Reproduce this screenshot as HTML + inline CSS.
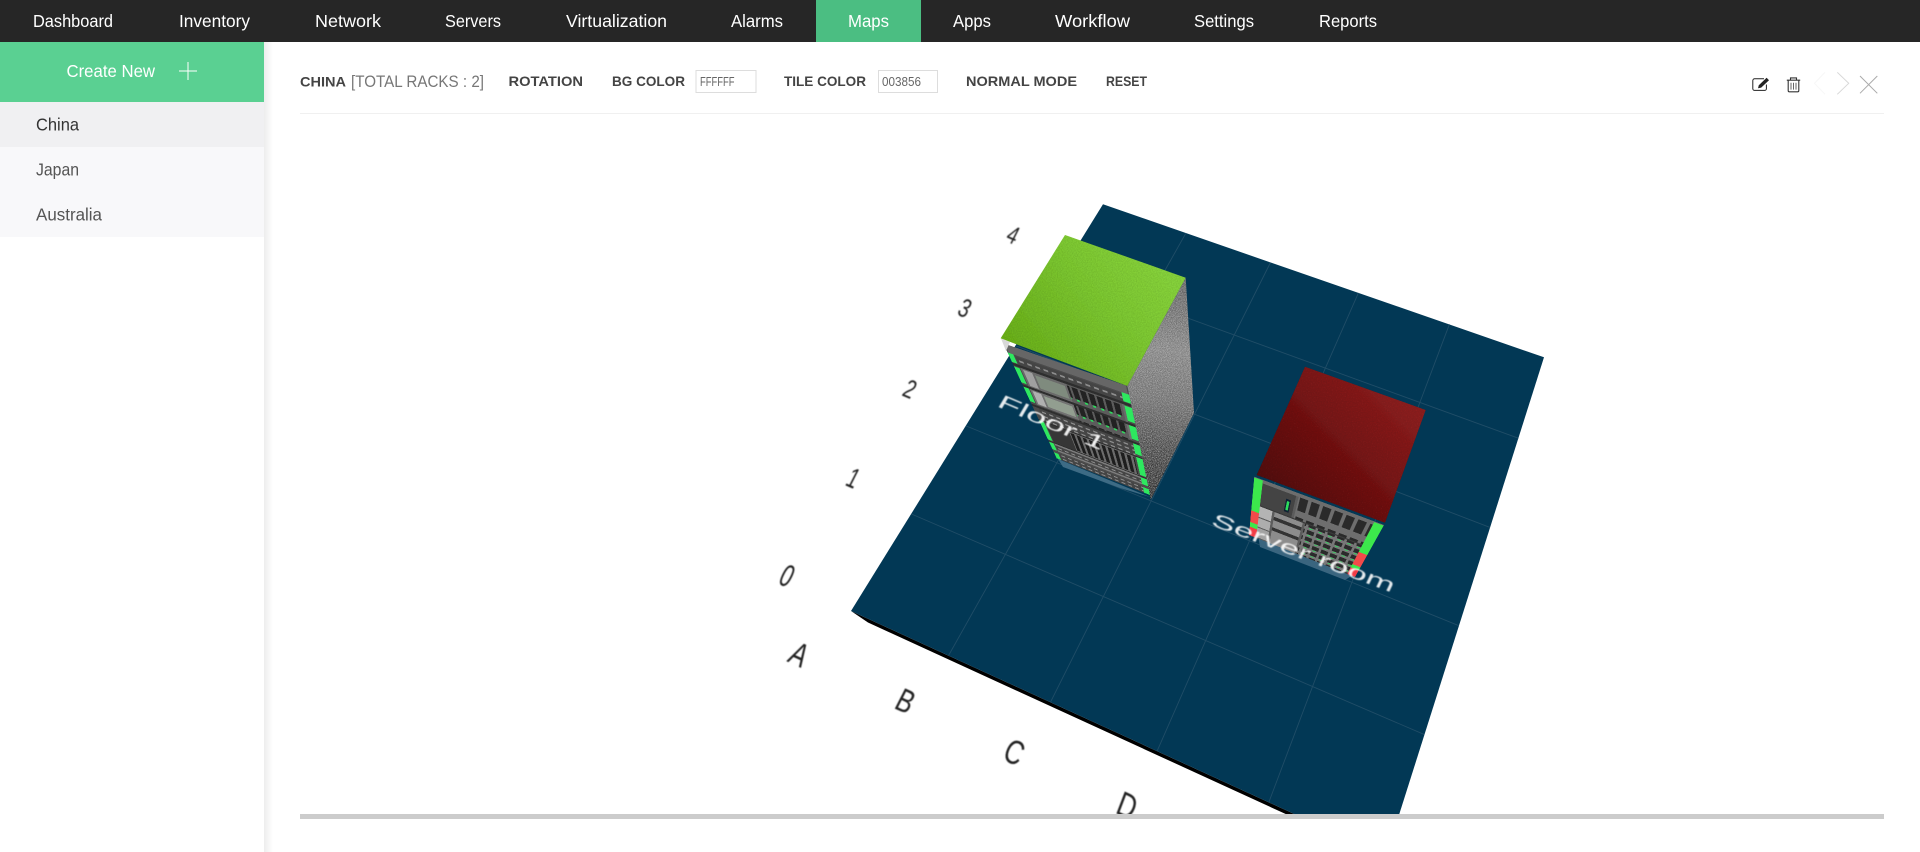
<!DOCTYPE html>
<html lang="en">
<head>
<meta charset="utf-8">
<title>Maps</title>
<style>
html,body{margin:0;padding:0;width:1920px;height:852px;overflow:hidden;background:#fff}
svg{display:block}
.layer{position:absolute;left:0;top:0}
.front{position:absolute;left:0;top:0;width:400px;height:400px;transform-origin:0 0;filter:blur(.5px)}
text{font-family:"Liberation Sans",sans-serif}
</style>
</head>
<body>
<!-- base layer: chrome + floor -->
<svg class="layer" width="1920" height="852" viewBox="0 0 1920 852">
<defs>
<clipPath id="cv"><rect x="300" y="114" width="1584" height="700"/></clipPath>
<linearGradient id="shadow" x1="0" x2="1" y1="0" y2="0"><stop offset="0" stop-color="#000" stop-opacity=".07"/><stop offset="1" stop-color="#000" stop-opacity="0"/></linearGradient>
<linearGradient id="sideG" gradientUnits="userSpaceOnUse" x1="1175" y1="280" x2="1155" y2="500"><stop offset="0" stop-color="#666"/><stop offset=".32" stop-color="#8c8c8c"/><stop offset=".55" stop-color="#767676"/><stop offset=".8" stop-color="#474747"/><stop offset="1" stop-color="#2a2a2a"/></linearGradient>
<filter id="noise" x="0" y="0" width="100%" height="100%"><feTurbulence type="fractalNoise" baseFrequency="1.2" numOctaves="2" seed="4" result="n"/><feColorMatrix in="n" type="matrix" values="0 0 0 0 0  0 0 0 0 0  0 0 0 0 0  .9 0 0 0 -.38" result="d"/><feComposite in="d" in2="SourceAlpha" operator="in" result="c"/><feColorMatrix in="n" type="matrix" values="0 0 0 0 1  0 0 0 0 1  0 0 0 0 1  0 .8 0 0 -.34" result="w"/><feComposite in="w" in2="SourceAlpha" operator="in" result="e"/><feMerge><feMergeNode in="SourceGraphic"/><feMergeNode in="c"/><feMergeNode in="e"/></feMerge></filter>
<filter id="soft"><feGaussianBlur stdDeviation=".4"/></filter>
</defs>

<!-- sidebar -->
<rect x="264" y="42" width="9" height="810" fill="url(#shadow)"/>
<rect x="0" y="42" width="264" height="60" fill="#5ad092"/>
<rect x="0" y="102" width="264" height="45" fill="#f0f0f2"/>
<rect x="0" y="147" width="264" height="90" fill="#f8f8fa"/>
<text x="66.5" y="77" font-size="17.5" fill="#fff" textLength="88.5" lengthAdjust="spacingAndGlyphs">Create New</text>
<path d="M188 62V80M179 71H197" stroke="#fff" stroke-width="1" fill="none"/>
<text x="36" y="130.5" font-size="17.5" fill="#333" textLength="43" lengthAdjust="spacingAndGlyphs">China</text>
<text x="36" y="175.5" font-size="17.5" fill="#555" textLength="43" lengthAdjust="spacingAndGlyphs">Japan</text>
<text x="36" y="220.5" font-size="17.5" fill="#555" textLength="66" lengthAdjust="spacingAndGlyphs">Australia</text>

<!-- toolbar -->
<g font-size="14" font-weight="bold" fill="#444">
<text x="300" y="86.5" textLength="46" lengthAdjust="spacingAndGlyphs">CHINA</text>
<text x="508.5" y="86" textLength="74.5" lengthAdjust="spacingAndGlyphs">ROTATION</text>
<text x="612" y="86" textLength="73" lengthAdjust="spacingAndGlyphs">BG COLOR</text>
<text x="784" y="86" textLength="82" lengthAdjust="spacingAndGlyphs">TILE COLOR</text>
<text x="966" y="86" textLength="111" lengthAdjust="spacingAndGlyphs">NORMAL MODE</text>
<text x="1106" y="86" textLength="41" lengthAdjust="spacingAndGlyphs">RESET</text>
</g>
<text x="351" y="87" font-size="17" fill="#777" textLength="133" lengthAdjust="spacingAndGlyphs">[TOTAL RACKS : 2]</text>
<rect x="696" y="70.5" width="60" height="22" fill="#fff" stroke="#ddd"/>
<rect x="878.5" y="70.5" width="59" height="22" fill="#fff" stroke="#ddd"/>
<text x="700" y="86" font-size="13" fill="#666" textLength="34.5" lengthAdjust="spacingAndGlyphs">FFFFFF</text>
<text x="882" y="86" font-size="13" fill="#666" textLength="39" lengthAdjust="spacingAndGlyphs">003856</text>
<rect x="300" y="113" width="1584" height="1" fill="#f0f0f0"/>

<!-- toolbar icons -->
<path d="M1764 78.8H1754.6A1.8 1.8 0 0 0 1752.8 80.6V88.6A1.8 1.8 0 0 0 1754.6 90.4H1764.6A1.8 1.8 0 0 0 1766.4 88.6V84.5" fill="none" stroke="#222" stroke-width="1"/>
<path d="M1758 88.2L1758.8 85.2L1766.6 77.8L1769 80.2L1761.2 87.6Z" fill="#222"/>
<path d="M1790.5 79.8V77.9H1796.5V79.8M1786.8 80.2H1800.2" fill="none" stroke="#333" stroke-width="1.1"/>
<path d="M1788.2 80.5V90.6A1.2 1.2 0 0 0 1789.4 91.8H1797.6A1.2 1.2 0 0 0 1798.8 90.6V80.5" fill="none" stroke="#333" stroke-width="1.1"/>
<path d="M1791 82.8V89.6M1793.5 82.8V89.6M1796 82.8V89.6" stroke="#666" stroke-width="1" fill="none"/>
<path d="M1825 72.3L1814.5 83.3L1825 94.3" fill="none" stroke="#f7f7f7" stroke-width="1"/>
<path d="M1837.3 72.3L1848.7 83.3L1837.3 94.3" fill="none" stroke="#d8d8d8" stroke-width="1"/>
<path d="M1860 76L1877.3 93.3M1877.3 76L1860 93.3" fill="none" stroke="#aaa" stroke-width="1"/>

<!-- floor -->
<g clip-path="url(#cv)">
<polygon points="851,611 1386,856 1386,860 868,622.5" fill="#000"/>
<polygon points="851,611 1386,856 1544,357.3 1103,204.3" fill="#023855"/>
<g stroke="#204d67" stroke-width=".9" fill="none">
<path d="M948.5 655.6L1185.8 233.3M1050.4 702.3L1270.5 262.5M1157.1 751.1L1358.4 292.9M1268.8 802.3L1449.4 324.3"/>
<path d="M911.4 514L1424.4 734.6M966.2 426L1458.9 625.7M1016.2 345.9L1490 527.4M1062 272.4L1518.3 438.2"/>
</g>
<g fill="#222" filter="url(#soft)">
<text dominant-baseline="central" text-anchor="middle" font-size="30" transform="matrix(.74 .34 -.55 .98 799 655)">A</text>
<text dominant-baseline="central" text-anchor="middle" font-size="30" transform="matrix(.74 .34 -.5 .98 905 702)">B</text>
<text dominant-baseline="central" text-anchor="middle" font-size="31" transform="matrix(.74 .34 -.45 1 1014 753)">C</text>
<text dominant-baseline="central" text-anchor="middle" font-size="32" transform="matrix(.74 .34 -.38 1 1127 806)">D</text>
<text dominant-baseline="central" text-anchor="middle" font-size="30" transform="matrix(.64 .27 -.48 .95 787 576)">0</text>
<text dominant-baseline="central" text-anchor="middle" font-size="27" transform="matrix(.64 .27 -.48 .95 853 479)">1</text>
<text dominant-baseline="central" text-anchor="middle" font-size="25" transform="matrix(.7 .3 -.48 .95 910 389)">2</text>
<text dominant-baseline="central" text-anchor="middle" font-size="25" transform="matrix(.7 .3 -.48 .95 965 308)">3</text>
<text dominant-baseline="central" text-anchor="middle" font-size="24" transform="matrix(.7 .3 -.48 .95 1013 235)">4</text>
</g>
</g>
<polygon points="1058,459 1150,497 1120,488 1063,467" fill="#3d6b85"/>
<polygon points="1258,535 1353,575 1345,580 1260,547" fill="#3a657f"/>
<polygon points="1185.7,277.7 1127.3,386 1150.7,500 1194,413" fill="url(#sideG)" filter="url(#noise)"/>
</svg>

<!-- nav bar -->
<svg class="layer" width="1920" height="42" viewBox="0 0 1920 42">
<rect width="1920" height="42" fill="#262626"/>
<rect x="816" width="105" height="42" fill="#4bbe82"/>
<g font-size="17.5" fill="#fff">
<text x="33" y="27" textLength="80" lengthAdjust="spacingAndGlyphs">Dashboard</text>
<text x="179" y="27" textLength="71" lengthAdjust="spacingAndGlyphs">Inventory</text>
<text x="315" y="27" textLength="66" lengthAdjust="spacingAndGlyphs">Network</text>
<text x="445" y="27" textLength="56" lengthAdjust="spacingAndGlyphs">Servers</text>
<text x="566" y="27" textLength="101" lengthAdjust="spacingAndGlyphs">Virtualization</text>
<text x="731" y="27" textLength="52" lengthAdjust="spacingAndGlyphs">Alarms</text>
<text x="848" y="27" textLength="41" lengthAdjust="spacingAndGlyphs">Maps</text>
<text x="953" y="27" textLength="38" lengthAdjust="spacingAndGlyphs">Apps</text>
<text x="1055" y="27" textLength="75" lengthAdjust="spacingAndGlyphs">Workflow</text>
<text x="1194" y="27" textLength="60" lengthAdjust="spacingAndGlyphs">Settings</text>
<text x="1319" y="27" textLength="58" lengthAdjust="spacingAndGlyphs">Reports</text>
</g>
</svg>

<!-- rack 1 front -->
<div class="front" style="transform:matrix3d(.138875,.04815,0,-.0001518, 1.04175,.681425,0,.00085955, 0,0,1,0, 1003.3,343.3,0,1)">
<svg width="400" height="400" viewBox="0 0 100 100" preserveAspectRatio="none">
<defs>
<pattern id="p1" width="7" height="14" patternUnits="userSpaceOnUse"><rect width="7" height="14" fill="#5c5c5c"/><rect x="1" y="2" width="5" height="9" fill="#222"/><rect x="2" y="11" width="2.5" height="1.6" fill="#2ddc5c"/></pattern>
<pattern id="p2" width="7" height="4" patternUnits="userSpaceOnUse"><rect width="7" height="4" fill="#454545"/><rect x="1" y="1.2" width="4" height="1.4" fill="#8e8e8e"/></pattern>
<pattern id="p3" width="6" height="20" patternUnits="userSpaceOnUse"><rect width="6" height="20" fill="#6c6c6c"/><rect x="1" y="1" width="3.6" height="18" fill="#1e1e1e"/></pattern>
</defs>
<rect width="100" height="100" fill="#4c4c4c"/>
<rect x="1" y="0" width="98" height="6" fill="#666"/>
<rect x="6" y="7" width="88" height="6" fill="url(#p2)"/>
<rect y="13" width="100" height="2" fill="#2e2e2e"/>
<rect x="6" y="15" width="88" height="14" fill="#6a6a6a"/>
<rect x="8" y="16" width="8" height="12" fill="#a0a0a0"/>
<rect x="18" y="17" width="26" height="10" fill="#7f8b7e"/>
<rect x="46" y="15" width="46" height="14" fill="url(#p1)"/>
<rect y="29" width="100" height="2" fill="#2e2e2e"/>
<rect x="6" y="31" width="88" height="13" fill="#727272"/>
<rect x="8" y="32" width="8" height="11" fill="#b0b0b0"/>
<rect x="18" y="33" width="26" height="9" fill="#929e90"/>
<rect x="46" y="31" width="46" height="14" fill="url(#p1)"/>
<rect y="45" width="100" height="2" fill="#2e2e2e"/>
<rect x="6" y="47" width="88" height="12" fill="url(#p2)"/>
<rect y="59" width="100" height="1" fill="#2a2a2a"/>
<rect x="6" y="60" width="24" height="20" fill="#363636"/>
<rect x="30" y="60" width="62" height="20" fill="url(#p3)"/>
<rect y="80" width="100" height="1" fill="#2a2a2a"/>
<rect x="6" y="81" width="88" height="9" fill="#7c7c7c"/>
<rect x="6" y="83" width="88" height="5" fill="url(#p2)"/>
<rect x="6" y="92" width="88" height="8" fill="url(#p2)"/>
<g fill="#2ee85f">
<rect x="0" y="6" width="5" height="6.5"/><rect x="0" y="15.7" width="5" height="12"/><rect x="0" y="31" width="5" height="12"/><rect x="0" y="60" width="5" height="19"/><rect x="0" y="81.5" width="5" height="8"/><rect x="0" y="93" width="5" height="7"/>
<rect x="94" y="6" width="6" height="6.5"/><rect x="94" y="15.7" width="6" height="12"/><rect x="94" y="31" width="6" height="12"/><rect x="94" y="47" width="6" height="10"/><rect x="94" y="60" width="6" height="19"/><rect x="94" y="81.5" width="6" height="8"/><rect x="94" y="93" width="6" height="7"/>
</g>
</svg>
</div>

<!-- rack 2 front -->
<div class="front" style="transform:matrix3d(.155825,.05685,0,-.0001217, .643325,.426975,0,.000525675, 0,0,1,0, 1254.3,476.7,0,1)">
<svg width="400" height="400" viewBox="0 0 100 100" preserveAspectRatio="none">
<defs>
<pattern id="q1" width="8" height="12" patternUnits="userSpaceOnUse"><rect width="8" height="12" fill="#777"/><rect x="1" y="1.5" width="6" height="7" fill="#2a2a2a"/><rect x="2" y="9.5" width="3" height="1.4" fill="#2ddc5c"/></pattern>
<pattern id="q2" width="9" height="32" patternUnits="userSpaceOnUse"><rect width="9" height="32" fill="#6e6e6e"/><rect x="1.2" y="3" width="6.4" height="22" fill="#2a2a2a"/></pattern>
</defs>
<rect width="100" height="100" fill="#5c5c5c"/>
<rect width="100" height="5" fill="#6d6d6d"/>
<rect x="6" y="5" width="28" height="34" fill="#444"/>
<rect x="27" y="14" width="4" height="20" fill="#123"/>
<rect x="28" y="17" width="2" height="14" fill="#2ddc5c"/>
<rect x="36" y="5" width="58" height="34" fill="url(#q2)"/>
<rect y="39" width="100" height="2" fill="#3a3a3a"/>
<rect x="6" y="41" width="12" height="18" fill="#b4b4b4"/>
<rect x="6" y="61" width="12" height="16" fill="#adadad"/>
<rect x="6" y="79" width="12" height="19" fill="#a2a2a2"/>
<rect x="20" y="41" width="24" height="59" fill="#8c8c8c"/>
<rect x="20" y="49" width="24" height="6" fill="#333"/>
<rect x="20" y="68" width="24" height="6" fill="#333"/>
<rect x="46" y="41" width="48" height="59" fill="url(#q1)"/>
<rect x="0" y="1" width="7" height="52" fill="#3ce84c"/>
<rect x="0" y="53" width="7" height="21" fill="#f24a4a"/>
<rect x="0" y="74" width="7" height="9" fill="#3ce84c"/>
<rect x="0" y="83" width="7" height="17" fill="#f23c46"/>
<rect x="93" y="1" width="7" height="52" fill="#3ce84c"/>
<rect x="93" y="53" width="7" height="25" fill="#f24a4a"/>
<rect x="93" y="78" width="7" height="7" fill="#3ce84c"/>
<rect x="93" y="85" width="7" height="15" fill="#f23c46"/>
</svg>
</div>

<!-- top layer -->
<svg class="layer" width="1920" height="852" viewBox="0 0 1920 852">
<defs>
<linearGradient id="gT" gradientUnits="userSpaceOnUse" x1="1030" y1="360" x2="1150" y2="260"><stop offset="0" stop-color="#6db41f"/><stop offset=".6" stop-color="#7fcb33"/><stop offset="1" stop-color="#88d53c"/></linearGradient>
<linearGradient id="rT" gradientUnits="userSpaceOnUse" x1="1285" y1="500" x2="1395" y2="390"><stop offset="0" stop-color="#561212"/><stop offset=".6" stop-color="#7c1b1b"/><stop offset="1" stop-color="#8f2222"/></linearGradient>
<filter id="fine" x="0" y="0" width="100%" height="100%"><feTurbulence type="fractalNoise" baseFrequency=".8" numOctaves="2" seed="9" result="n"/><feColorMatrix in="n" type="matrix" values="0 0 0 0 0  0 0 0 0 0  0 0 0 0 0  .4 0 0 0 -.1" result="d"/><feComposite in="d" in2="SourceAlpha" operator="in" result="c"/><feMerge><feMergeNode in="SourceGraphic"/><feMergeNode in="c"/></feMerge></filter>
<filter id="soft2"><feGaussianBlur stdDeviation=".45"/></filter>
</defs>
<polygon points="1001,338.5 1010,342 1006,351" fill="#d8d8d8"/>
<polygon points="1065,235 1185.7,277.7 1127.3,386 1000.7,338.3" fill="url(#gT)" filter="url(#fine)"/>
<polygon points="1305,366.7 1425.7,410 1385,522.7 1256.7,475" fill="url(#rT)" filter="url(#fine)"/>
<g filter="url(#soft2)">
<text font-size="20" fill="#fff" fill-opacity=".9" textLength="114" lengthAdjust="spacingAndGlyphs" transform="matrix(.92 .39 -.5 .85 996 406)">Floor 1</text>
<text font-size="20" fill="#fff" fill-opacity=".9" textLength="193" lengthAdjust="spacingAndGlyphs" transform="matrix(.94 .35 -.42 .88 1210 525)">Server room</text>
</g>
<rect x="300" y="814" width="1584" height="5" fill="#cccccc"/>
</svg>
</body>
</html>
